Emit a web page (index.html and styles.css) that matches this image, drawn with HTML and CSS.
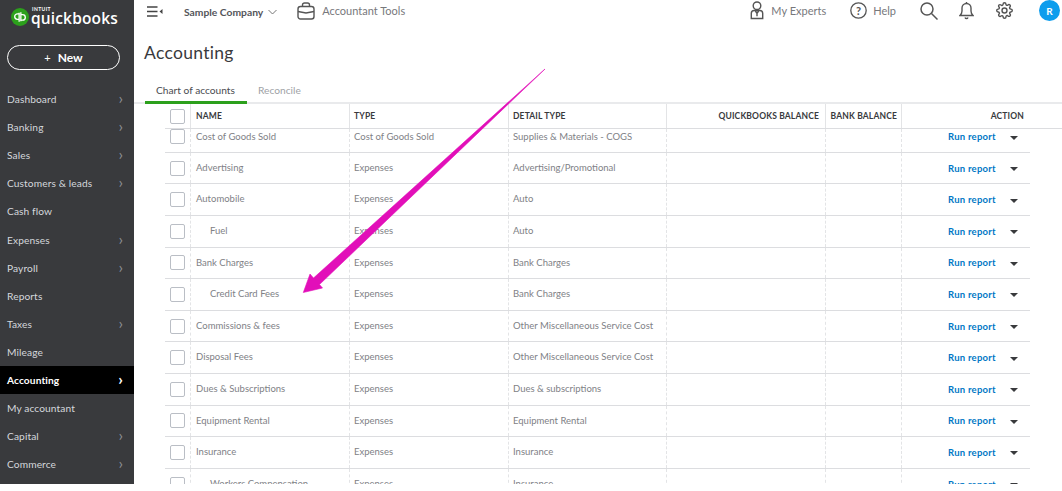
FILE: index.html
```html
<!DOCTYPE html>
<html lang="en">
<head>
<meta charset="utf-8">
<title>Accounting</title>
<link rel="stylesheet" href="styles.css">
</head>
<body>
<div class="app">
  <aside class="sidebar">
    <div class="logo">
      <svg class="logo-mark" width="18" height="18" viewBox="0 0 19 19"><circle cx="9.5" cy="9.5" r="9.5" fill="#2ca01c"/><path d="M8.6 5v9.5M8.6 6.2H6.8a2.9 2.9 0 0 0 0 5.8h1.8M10.4 4.5V14M10.4 7h1.8a2.9 2.9 0 0 1 0 5.8h-1.8" fill="none" stroke="#fff" stroke-width="1.4"/></svg>
      <div class="logo-text"><span class="intuit">INTUIT</span><span class="qb">quickbooks</span></div>
    </div>
    <button class="new-btn"><span class="plus">+</span>New</button>
    <nav class="nav">
      <div class="nav-item"><span>Dashboard</span><span class="chev">›</span></div>
      <div class="nav-item"><span>Banking</span><span class="chev">›</span></div>
      <div class="nav-item"><span>Sales</span><span class="chev">›</span></div>
      <div class="nav-item"><span>Customers &amp; leads</span><span class="chev">›</span></div>
      <div class="nav-item"><span>Cash flow</span></div>
      <div class="nav-item"><span>Expenses</span><span class="chev">›</span></div>
      <div class="nav-item"><span>Payroll</span><span class="chev">›</span></div>
      <div class="nav-item"><span>Reports</span></div>
      <div class="nav-item"><span>Taxes</span><span class="chev">›</span></div>
      <div class="nav-item"><span>Mileage</span></div>
      <div class="nav-item active"><span>Accounting</span><span class="chev">›</span></div>
      <div class="nav-item"><span>My accountant</span></div>
      <div class="nav-item"><span>Capital</span><span class="chev">›</span></div>
      <div class="nav-item"><span>Commerce</span><span class="chev">›</span></div>
    </nav>
  </aside>
  <main class="main">
    <header class="topbar">
      <svg class="menu-icon" width="16" height="12" viewBox="0 0 16 12"><path d="M0 1h10.500M0 5.500h10.500M0 10h10.500" stroke="#444" stroke-width="1.300" fill="none"/><path d="M15.500 3v5l-3-2.500z" fill="#444"/></svg>
      <span class="company">Sample Company</span>
      <svg class="caret" width="9" height="6" viewBox="0 0 9 6"><path d="M.5 1l4 4 4-4" fill="none" stroke="#777" stroke-width="1"/></svg>
      <svg class="case" width="18" height="18" viewBox="0 0 18 18"><rect x="1" y="4.500" width="16" height="12.500" rx="2.500" fill="none" stroke="#555" stroke-width="1.400"/><path d="M5.500 4.500V3a2 2 0 0 1 2-2h3a2 2 0 0 1 2 2v1.500M1 9.500l8 1.500 8-1.500" fill="none" stroke="#555" stroke-width="1.400"/></svg>
      <span class="tools">Accountant Tools</span>
      <div class="top-right">
        <svg class="ti-expert" width="14" height="19" viewBox="0 0 14 20"><circle cx="7" cy="5" r="4" fill="none" stroke="#555" stroke-width="1.500"/><path d="M1 18.500V13a3 3 0 0 1 3-3h6a3 3 0 0 1 3 3v5.500zM5 10l2 3 2-3M7 13v3" fill="none" stroke="#555" stroke-width="1.500"/></svg>
        <span class="experts">My Experts</span>
        <svg class="ti-help" width="17" height="17" viewBox="0 0 17 17"><circle cx="8.500" cy="8.500" r="7.700" fill="none" stroke="#555" stroke-width="1.300"/><text x="8.500" y="12.500" class="help-q">?</text></svg>
        <span class="help">Help</span>
        <svg class="ti-search" width="18" height="18" viewBox="0 0 18 18"><circle cx="7" cy="7" r="6" fill="none" stroke="#555" stroke-width="1.500"/><path d="M11.500 11.500l6 6" stroke="#555" stroke-width="1.500"/></svg>
        <svg class="ti-bell" width="15" height="19" viewBox="0 0 15 19"><path d="M1 14.500c1.500-1.500 2-2.500 2-4.500V7a4.500 4.500 0 0 1 9 0v3c0 2 .5 3 2 4.500z" fill="none" stroke="#555" stroke-width="1.400"/><path d="M6 16.500a1.600 1.600 0 0 0 3 0M7.500 1v1.500" fill="none" stroke="#555" stroke-width="1.400"/></svg>
        <svg class="ti-gear" width="17" height="17" viewBox="0 0 24 24"><circle cx="12" cy="12" r="3.500" fill="none" stroke="#555" stroke-width="2"/><path d="M19.4 15a1.65 1.65 0 0 0 .33 1.82l.06.06a2 2 0 0 1 0 2.83 2 2 0 0 1-2.83 0l-.06-.06a1.65 1.65 0 0 0-1.82-.33 1.65 1.65 0 0 0-1 1.51V21a2 2 0 0 1-2 2 2 2 0 0 1-2-2v-.09A1.65 1.65 0 0 0 9 19.4a1.65 1.65 0 0 0-1.82.33l-.06.06a2 2 0 0 1-2.83 0 2 2 0 0 1 0-2.83l.06-.06a1.65 1.65 0 0 0 .33-1.82 1.65 1.65 0 0 0-1.51-1H3a2 2 0 0 1-2-2 2 2 0 0 1 2-2h.09A1.65 1.65 0 0 0 4.600 9a1.65 1.65 0 0 0-.33-1.82l-.06-.06a2 2 0 0 1 0-2.83 2 2 0 0 1 2.83 0l.06.06a1.65 1.65 0 0 0 1.82.33H9a1.65 1.65 0 0 0 1-1.51V3a2 2 0 0 1 2-2 2 2 0 0 1 2 2v.09a1.65 1.65 0 0 0 1 1.51 1.65 1.65 0 0 0 1.82-.33l.06-.06a2 2 0 0 1 2.83 0 2 2 0 0 1 0 2.83l-.06.06a1.65 1.65 0 0 0-.33 1.82V9a1.65 1.65 0 0 0 1.51 1H21a2 2 0 0 1 2 2 2 2 0 0 1-2 2h-.09a1.65 1.65 0 0 0-1.51 1z" fill="none" stroke="#555" stroke-width="2"/></svg>
        <span class="avatar">R</span>
      </div>
    </header>
    <h1 class="title">Accounting</h1>
    <div class="tabs">
      <span class="tab current">Chart of accounts</span>
      <span class="tab">Reconcile</span>
    </div>
    <section class="table">
      <div class="row head">
        <div class="cell c-check"><span class="box"></span></div>
        <div class="cell c-name">NAME</div>
        <div class="cell c-type">TYPE</div>
        <div class="cell c-detail">DETAIL TYPE</div>
        <div class="cell c-qb">QUICKBOOKS BALANCE</div>
        <div class="cell c-bank">BANK BALANCE</div>
        <div class="cell c-action">ACTION</div>
      </div>
      <div class="row first">
        <div class="cell c-check"><span class="box"></span></div>
        <div class="cell c-name">Cost of Goods Sold</div>
        <div class="cell c-type">Cost of Goods Sold</div>
        <div class="cell c-detail">Supplies &amp; Materials - COGS</div>
        <div class="cell c-qb"></div><div class="cell c-bank"></div>
        <div class="cell c-action"><a class="run">Run report</a><span class="tri"></span></div>
      </div>
      <div class="row">
        <div class="cell c-check"><span class="box"></span></div>
        <div class="cell c-name">Advertising</div>
        <div class="cell c-type">Expenses</div>
        <div class="cell c-detail">Advertising/Promotional</div>
        <div class="cell c-qb"></div><div class="cell c-bank"></div>
        <div class="cell c-action"><a class="run">Run report</a><span class="tri"></span></div>
      </div>
      <div class="row">
        <div class="cell c-check"><span class="box"></span></div>
        <div class="cell c-name">Automobile</div>
        <div class="cell c-type">Expenses</div>
        <div class="cell c-detail">Auto</div>
        <div class="cell c-qb"></div><div class="cell c-bank"></div>
        <div class="cell c-action"><a class="run">Run report</a><span class="tri"></span></div>
      </div>
      <div class="row">
        <div class="cell c-check"><span class="box"></span></div>
        <div class="cell c-name sub">Fuel</div>
        <div class="cell c-type">Expenses</div>
        <div class="cell c-detail">Auto</div>
        <div class="cell c-qb"></div><div class="cell c-bank"></div>
        <div class="cell c-action"><a class="run">Run report</a><span class="tri"></span></div>
      </div>
      <div class="row">
        <div class="cell c-check"><span class="box"></span></div>
        <div class="cell c-name">Bank Charges</div>
        <div class="cell c-type">Expenses</div>
        <div class="cell c-detail">Bank Charges</div>
        <div class="cell c-qb"></div><div class="cell c-bank"></div>
        <div class="cell c-action"><a class="run">Run report</a><span class="tri"></span></div>
      </div>
      <div class="row">
        <div class="cell c-check"><span class="box"></span></div>
        <div class="cell c-name sub">Credit Card Fees</div>
        <div class="cell c-type">Expenses</div>
        <div class="cell c-detail">Bank Charges</div>
        <div class="cell c-qb"></div><div class="cell c-bank"></div>
        <div class="cell c-action"><a class="run">Run report</a><span class="tri"></span></div>
      </div>
      <div class="row">
        <div class="cell c-check"><span class="box"></span></div>
        <div class="cell c-name">Commissions &amp; fees</div>
        <div class="cell c-type">Expenses</div>
        <div class="cell c-detail">Other Miscellaneous Service Cost</div>
        <div class="cell c-qb"></div><div class="cell c-bank"></div>
        <div class="cell c-action"><a class="run">Run report</a><span class="tri"></span></div>
      </div>
      <div class="row">
        <div class="cell c-check"><span class="box"></span></div>
        <div class="cell c-name">Disposal Fees</div>
        <div class="cell c-type">Expenses</div>
        <div class="cell c-detail">Other Miscellaneous Service Cost</div>
        <div class="cell c-qb"></div><div class="cell c-bank"></div>
        <div class="cell c-action"><a class="run">Run report</a><span class="tri"></span></div>
      </div>
      <div class="row">
        <div class="cell c-check"><span class="box"></span></div>
        <div class="cell c-name">Dues &amp; Subscriptions</div>
        <div class="cell c-type">Expenses</div>
        <div class="cell c-detail">Dues &amp; subscriptions</div>
        <div class="cell c-qb"></div><div class="cell c-bank"></div>
        <div class="cell c-action"><a class="run">Run report</a><span class="tri"></span></div>
      </div>
      <div class="row">
        <div class="cell c-check"><span class="box"></span></div>
        <div class="cell c-name">Equipment Rental</div>
        <div class="cell c-type">Expenses</div>
        <div class="cell c-detail">Equipment Rental</div>
        <div class="cell c-qb"></div><div class="cell c-bank"></div>
        <div class="cell c-action"><a class="run">Run report</a><span class="tri"></span></div>
      </div>
      <div class="row">
        <div class="cell c-check"><span class="box"></span></div>
        <div class="cell c-name">Insurance</div>
        <div class="cell c-type">Expenses</div>
        <div class="cell c-detail">Insurance</div>
        <div class="cell c-qb"></div><div class="cell c-bank"></div>
        <div class="cell c-action"><a class="run">Run report</a><span class="tri"></span></div>
      </div>
      <div class="row">
        <div class="cell c-check"><span class="box"></span></div>
        <div class="cell c-name sub">Workers Compensation</div>
        <div class="cell c-type">Expenses</div>
        <div class="cell c-detail">Insurance</div>
        <div class="cell c-qb"></div><div class="cell c-bank"></div>
        <div class="cell c-action"><a class="run">Run report</a><span class="tri"></span></div>
      </div>
    </section>
  </main>
  <svg class="arrow" width="1062" height="484" viewBox="0 0 1062 484"><path d="M545 69 L319.500 284.500 L322.500 288 L303.300 292.500 L310 274 L313.500 278 Z" fill="#e20fb9" stroke="#e20fb9" stroke-width=".6" stroke-linejoin="round"/></svg>
</div>
</body>
</html>
```
FILE: styles.css
```css
* { box-sizing: border-box; }
html, body { margin: 0; padding: 0; background: #fff; overflow: hidden; }
body { font-family: Lato, "Open Sans", sans-serif; color: #393a3d; }
.app { position: relative; display: flex; width: 1062px; height: 484px; overflow: hidden; }

.sidebar { flex: 0 0 134px; background: #393a3d; color: #d4d7dc; }
.logo { display: flex; align-items: flex-start; gap: 2px; height: 30px; padding: 8px 0 0 11px; }
.logo-text { display: flex; flex-direction: column; color: #fff; margin-top: -2px; }
.intuit { font-size: 5px; line-height: 6px; font-weight: 700; letter-spacing: .4px; height: 5px; margin-left: 1px; }
.qb { font: 600 15.500px/14px "Open Sans", sans-serif; letter-spacing: .15px; }
.new-btn { display: block; width: 113px; height: 25px; margin: 15px 0 0 7px; padding: 0 0 1px; border: 1px solid #fff; border-radius: 13px; background: transparent; color: #fff; font: 700 12px Lato, sans-serif; }
.plus { font-weight: 400; font-size: 11px; margin-right: 7px; }
.nav { margin-top: 15px; }
.nav-item { display: flex; justify-content: space-between; align-items: center; height: 28.120px; padding: 0 11px 0 7px; font-size: 10.200px; letter-spacing: .1px; }
.chev { font-size: 16px; color: #8d9096; line-height: 1; margin-top: -2px; }
.nav-item.active { background: #000; color: #fff; font-weight: 700; }
.nav-item.active .chev { color: #fff; font-weight: 700; }

.main { flex: 1; min-width: 0; }
.topbar { display: flex; align-items: center; height: 24px; padding: 0 0 0 13px; font-size: 11px; color: #77787c; }
.menu-icon { margin-right: 21px; }
.company { color: #54555a; font-weight: 700; font-size: 10.300px; margin-right: 5px; }
.caret { margin-right: 20px; }
.case { margin: 0 7px 2px 0; }
.tools { margin-bottom: 4px; }
.top-right { display: flex; align-items: center; margin: 0 0 3px auto; padding-right: 2px; }
.ti-expert { margin-right: 7px; }
.experts { margin-right: 24px; }
.ti-help { margin-right: 6px; }
.help { margin-right: 24px; }
.help-q { font: 700 11px Lato, sans-serif; fill: #555; text-anchor: middle; }
.ti-search { margin-right: 21px; }
.ti-bell { margin-right: 22px; }
.ti-gear { margin-right: 26px; }
.avatar { width: 21px; height: 21px; border-radius: 50%; background: #0d9ded; color: #fff; font-size: 10px; font-weight: 700; display: flex; align-items: center; justify-content: center; }

.title { margin: 17px 0 0 10px; height: 24px; font-size: 17.500px; line-height: 24px; font-weight: 400; letter-spacing: .3px; color: #393a3d; }
.tabs { display: flex; position: relative; z-index: 1; margin: 18px 0 0 11px; height: 19px; }
.tab { font-size: 10.200px; color: #a0a2a6; line-height: 14px; padding-left: 11px; }
.tab.current { width: 102px; color: #4a4b50; height: 21px; border-bottom: 3px solid #2ca01c; }

.table { border-top: 2px solid #e9eaec; }
.row { display: grid; grid-template-columns: 25px 159px 159px 158px 159px 76px 129px; margin-left: 31px; width: 865px; height: 31.600px; border-bottom: 1px solid #dcdde0; font-size: 9.500px; color: #808186; }
.row.first { height: 23.800px; }
.row.first .cell { padding-bottom: 8px; }
.row.first .c-action, .row.first .c-check { padding-bottom: 7px; }
.row.head { height: 25px; width: 897px; grid-template-columns: 25px 159px 159px 158px 159px 76px 161px; color: #393a3d; font-weight: 700; font-size: 8.500px; letter-spacing: .15px; }
.cell { display: flex; align-items: center; padding: 0 0 1.500px 4px; border-left: 1px dashed #e3e4e6; min-width: 0; white-space: nowrap; }
.head .cell { border-left: 1px solid #e3e4e6; padding-bottom: 0; }
.cell.c-check, .head .cell.c-check { border-left: 0; padding: 0 0 0 5px; }
.cell.c-name { padding-left: 5px; }
.cell.sub { padding-left: 19px; }
.c-qb, .c-bank { justify-content: flex-end; }
.head .c-qb { padding-right: 6px; }
.head .c-bank { padding-right: 4px; }
.head .c-action { justify-content: flex-end; padding-right: 38px; }
.c-action { padding: 0 0 0 46px; }
.box { display: block; flex: none; width: 15px; height: 15px; border: 1px solid #babec5; border-radius: 2px; background: #fff; }
.run { color: #0077c5; font-weight: 700; font-size: 9.500px; letter-spacing: .25px; width: 50px; margin-right: 12px; }
.tri { width: 0; height: 0; border-left: 4px solid transparent; border-right: 4px solid transparent; border-top: 4.500px solid #393a3d; margin-top: 2px; }

.arrow { position: absolute; left: 0; top: 0; pointer-events: none; }
```
